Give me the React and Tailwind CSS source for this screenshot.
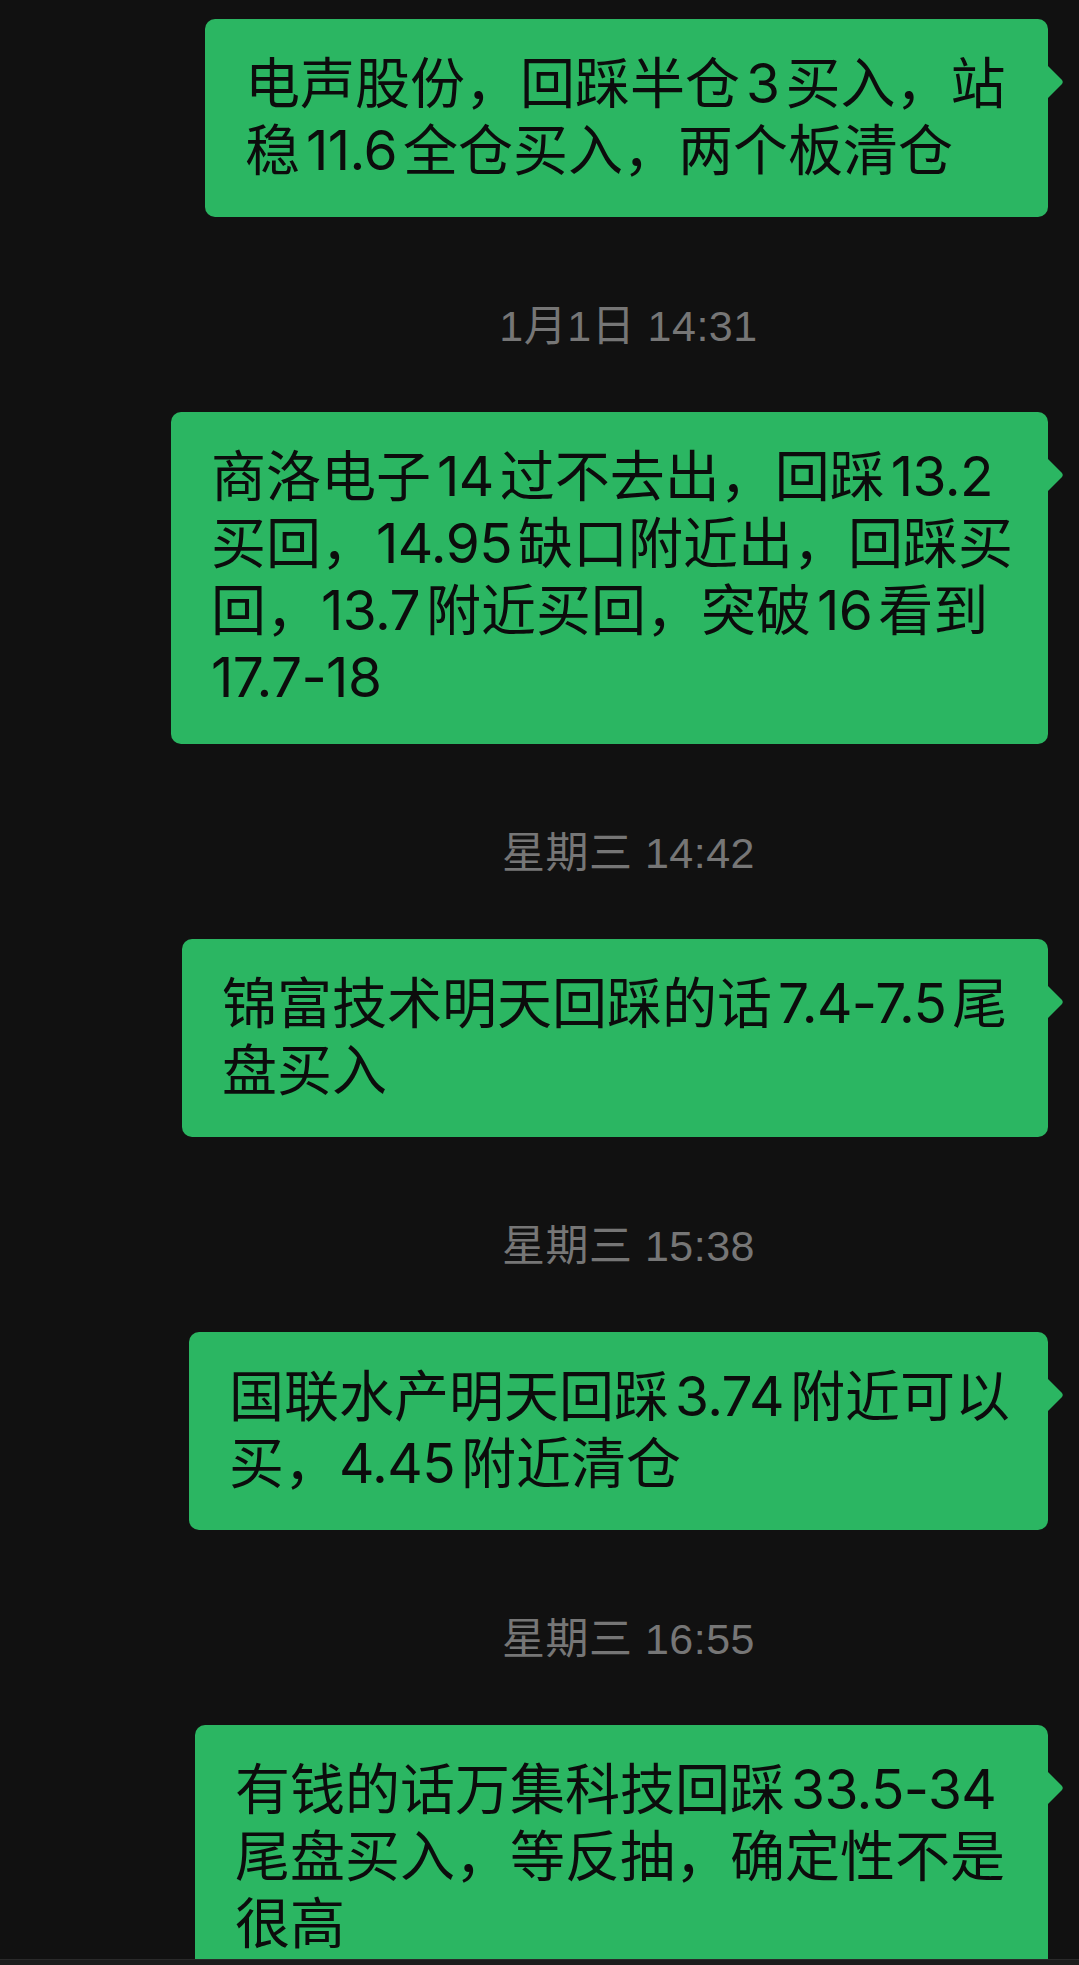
import React from 'react';

const messages = [
  {
    width: 'w-[843px]',
    lines: ['电声股份，回踩半仓3买入，站', '稳11.6全仓买入，两个板清仓'],
    time: '1月1日 14:31',
  },
  {
    width: 'w-[877px]',
    lines: ['商洛电子14过不去出，回踩13.2', '买回，14.95缺口附近出，回踩买', '回，13.7附近买回，突破16看到', '17.7-18'],
    time: '星期三 14:42',
  },
  {
    width: 'w-[866px]',
    lines: ['锦富技术明天回踩的话7.4-7.5尾', '盘买入'],
    time: '星期三 15:38',
  },
  {
    width: 'w-[859px]',
    lines: ['国联水产明天回踩3.74附近可以', '买，4.45附近清仓'],
    time: '星期三 16:55',
  },
  {
    width: 'w-[853px]',
    lines: ['有钱的话万集科技回踩33.5-34', '尾盘买入，等反抽，确定性不是', '很高'],
  },
];

// digits sit a little apart from the CJK glyphs, like the iOS rendering
const Line = ({ text }) => {
  const parts = text.split(/([0-9.\-]+)/);
  return (
    <div className="whitespace-nowrap">
      {parts.map((p, i) => {
        if (!/^[0-9.\-]+$/.test(p)) return <span key={i}>{p}</span>;
        const prev = parts[i - 1] || '';
        const tight = prev === '' || prev.endsWith('，');
        return (
          <span
            key={i}
            className={`font-['Inter',sans-serif] leading-[40px] tracking-[-0.6px] ${tight ? 'mr-[6px]' : 'mx-[6px]'}`}
          >
            {p}
          </span>
        );
      })}
    </div>
  );
};

const Bubble = ({ width, lines }) => (
  <div className="flex justify-end pr-[31px]">
    <div className={`relative ${width} rounded-[10px] bg-[#2bb662] pl-[40px] pr-[30px] py-[32px] text-[55px] leading-[67px] text-[#0c0c0c]`}>
      {lines.map((l, i) => (
        <Line key={i} text={l} />
      ))}
      <svg className="absolute -right-[16px] top-[46px]" width="17" height="34" viewBox="0 0 17 34">
        <path d="M0 0 L14.5 14.5 Q17 17 14.5 19.5 L0 34 Z" fill="#2bb662" />
      </svg>
    </div>
  </div>
);

export default function App() {
  return (
    <div className="relative h-[1965px] w-full overflow-hidden bg-[#111111] pt-[19px] font-['Liberation_Sans','Noto_Sans_CJK_SC',sans-serif]">
      {messages.map((m, i) => (
        <div key={i}>
          <Bubble width={m.width} lines={m.lines} />
          {m.time && (
            <div className="mt-[84px] mb-[61px] flex justify-center pl-[178px] text-[43px] leading-[50px] tracking-[0.5px] text-[#767676]">
              {m.time}
            </div>
          )}
        </div>
      ))}
      <div className="absolute bottom-0 left-0 right-0 h-[6px] border-t border-[#2a2a2a] bg-[#1c1c1c]" />
    </div>
  );
}
